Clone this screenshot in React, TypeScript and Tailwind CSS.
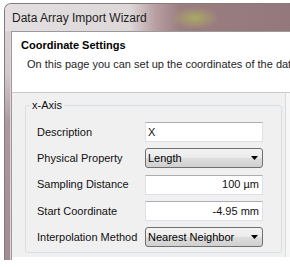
import React from "react";

function Arrow() {
  return (
    <svg width="7" height="4" viewBox="0 0 7 4" className="block">
      <polygon points="0,0 7,0 3.5,4" fill="#000" />
    </svg>
  );
}

function TextBox({ value, right }: { value: string; right?: boolean }) {
  return (
    <div
      className={
        "w-[118px] h-[20px] bg-white border border-[#dde1e7] border-t-[#abadb3] flex items-center text-[11px] text-[#111] " +
        (right ? "justify-end pr-[3px]" : "pl-[2px]")
      }
    >
      {value}
    </div>
  );
}

function Combo({ value }: { value: string }) {
  return (
    <div className="w-[118px] h-[20px] rounded-[3px] border border-[#707070] bg-[linear-gradient(180deg,#f3f3f3_0%,#ebebeb_50%,#dddddd_51%,#d0d0d0_100%)] flex items-center justify-between pl-[2px] pr-[4px] text-[11px] text-[#000]">
      <span>{value}</span>
      <Arrow />
    </div>
  );
}

export default function App() {
  return (
    <div className="w-[290px] h-[267px] bg-white overflow-hidden font-['Liberation_Sans',Arial,sans-serif]">
      <div className="ml-[4px] mt-[3px] w-[296px] h-[257px] rounded-tl-[7px] border-l border-t border-[#85797d] bg-[linear-gradient(180deg,#dcd7d8_0px,#d2c9cc_70px,#ac989e_120px,#a28b92_257px)] flex flex-col">
        <div className="h-[27px] shrink-0 rounded-tl-[6px] flex items-center pl-[7px] text-[12px] text-[#1e1e1e] bg-[image:radial-gradient(ellipse_24px_11px_at_190px_14px,rgba(172,176,96,0.85),rgba(172,176,96,0)),linear-gradient(90deg,#e3dfe0_0px,#ddd7d8_125px,#b89fa2_150px,#9c7e81_175px,#93777a_295px)]">
          Data Array Import Wizard
        </div>
        <div className="ml-[6px] flex-1 flex flex-col border-l border-t border-[#9a9a9a] bg-white shadow-[-1px_0_0_#dcd4d6]">
          <div className="h-[61px] shrink-0 border-b border-[#c9c9c9] pl-[9px] pt-[7px] overflow-hidden">
            <div className="text-[11px] leading-[13px] font-bold text-black whitespace-nowrap">
              Coordinate Settings
            </div>
            <div className="mt-[6px] ml-[6px] text-[11px] leading-[13px] text-[#1e1e1e] whitespace-nowrap">
              On this page you can set up the coordinates of the data
            </div>
          </div>
          <div className="h-[164px] shrink-0 flex bg-[#f7f7f7]">
            <div className="w-[274px] shrink-0 bg-[#f0f0f0] border-r border-[#dcdcdc] pt-[7px] pl-[13px]">
              <fieldset className="w-[257px] h-[153px] border border-[#d5dfe5] rounded-[3px] pt-[11px]">
                <legend className="ml-[4px] px-[2px] text-[11px] leading-[11px] text-[#111]">
                  x-Axis
                </legend>
                <div className="pl-[11px] flex flex-col gap-[6.25px] text-[11px] text-[#111]">
                  <div className="flex items-center">
                    <div className="w-[108px]">Description</div>
                    <TextBox value="X" />
                  </div>
                  <div className="flex items-center">
                    <div className="w-[108px]">Physical Property</div>
                    <Combo value="Length" />
                  </div>
                  <div className="flex items-center">
                    <div className="w-[108px]">Sampling Distance</div>
                    <TextBox value="100 µm" right />
                  </div>
                  <div className="flex items-center">
                    <div className="w-[108px]">Start Coordinate</div>
                    <TextBox value="-4.95 mm" right />
                  </div>
                  <div className="flex items-center">
                    <div className="w-[108px]">Interpolation Method</div>
                    <Combo value="Nearest Neighbor" />
                  </div>
                </div>
              </fieldset>
            </div>
          </div>
        </div>
      </div>
    </div>
  );
}
